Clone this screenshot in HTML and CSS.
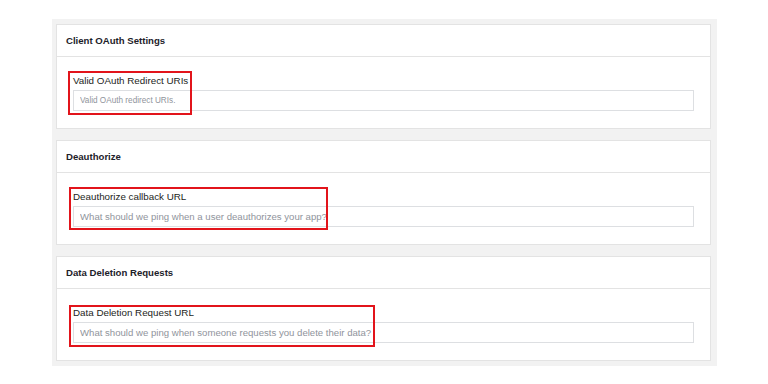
FILE: index.html
```html
<!DOCTYPE html>
<html lang="en">
<head>
    <meta charset="UTF-8">
    <title>App Settings</title>
    <link rel="stylesheet" href="styles.css">
</head>
<body>

<div class="settings">
    <div class="card">
        <div class="card-header">Client OAuth Settings</div>
        <div class="card-body">
            <div class="field">
                <label for="redirectUris">Valid OAuth Redirect URIs</label>
                <input type="text" id="redirectUris" class="small" placeholder="Valid OAuth redirect URIs.">
                <div class="mark mark-1"></div>
            </div>
        </div>
    </div>

    <div class="card">
        <div class="card-header">Deauthorize</div>
        <div class="card-body">
            <div class="field">
                <label for="deauthUrl">Deauthorize callback URL</label>
                <input type="text" id="deauthUrl" placeholder="What should we ping when a user deauthorizes your app?">
                <div class="mark mark-2"></div>
            </div>
        </div>
    </div>

    <div class="card">
        <div class="card-header">Data Deletion Requests</div>
        <div class="card-body">
            <div class="field">
                <label for="deletionUrl">Data Deletion Request URL</label>
                <input type="text" id="deletionUrl" placeholder="What should we ping when someone requests you delete their data?">
                <div class="mark mark-3"></div>
            </div>
        </div>
    </div>
</div>

</body>
</html>
```

FILE: styles.css
```css
body {
    font-family: "Liberation Sans", Arial, sans-serif;
    background-color: white;
    margin: 0;
    padding: 19px 0 0 52px;
}
.settings {
    width: 655px;
    background-color: #f2f2f2;
    padding: 5px 6px 5px 4px;
    display: flex;
    flex-direction: column;
    gap: 11px;
}
.card {
    background-color: white;
    border: 1px solid #e3e3e3;
}
.card-header {
    height: 31px;
    line-height: 31px;
    padding-left: 9px;
    font-size: 9.6px;
    font-weight: bold;
    color: #1d2129;
    border-bottom: 1px solid #e3e3e3;
}
.card-body {
    height: 71px;
    box-sizing: border-box;
    padding: 17px 16px 0 16px;
}
.field {
    position: relative;
}
.field label {
    display: block;
    height: 14px;
    line-height: 14px;
    margin-bottom: 2px;
    font-size: 9.8px;
    color: #1c1e21;
}
.field input {
    display: block;
    width: 100%;
    height: 21px;
    box-sizing: border-box;
    border: 1px solid #dddfe2;
    padding: 0 6px;
    font-family: inherit;
    font-size: 9.6px;
    color: #1c1e21;
    outline: none;
}
.field input::placeholder {
    color: #90949c;
}
.field input.small {
    font-size: 8.2px;
}
/* red annotation boxes */
.mark {
    position: absolute;
    left: -5px;
    border: 2px solid #e2141b;
    box-sizing: border-box;
    pointer-events: none;
}
.mark-1 {
    top: -3px;
    width: 124px;
    height: 44px;
}
.mark-2 {
    top: -3px;
    left: -4px;
    width: 259px;
    height: 43px;
}
.mark-3 {
    top: -1px;
    left: -4px;
    width: 306px;
    height: 42px;
}
```
